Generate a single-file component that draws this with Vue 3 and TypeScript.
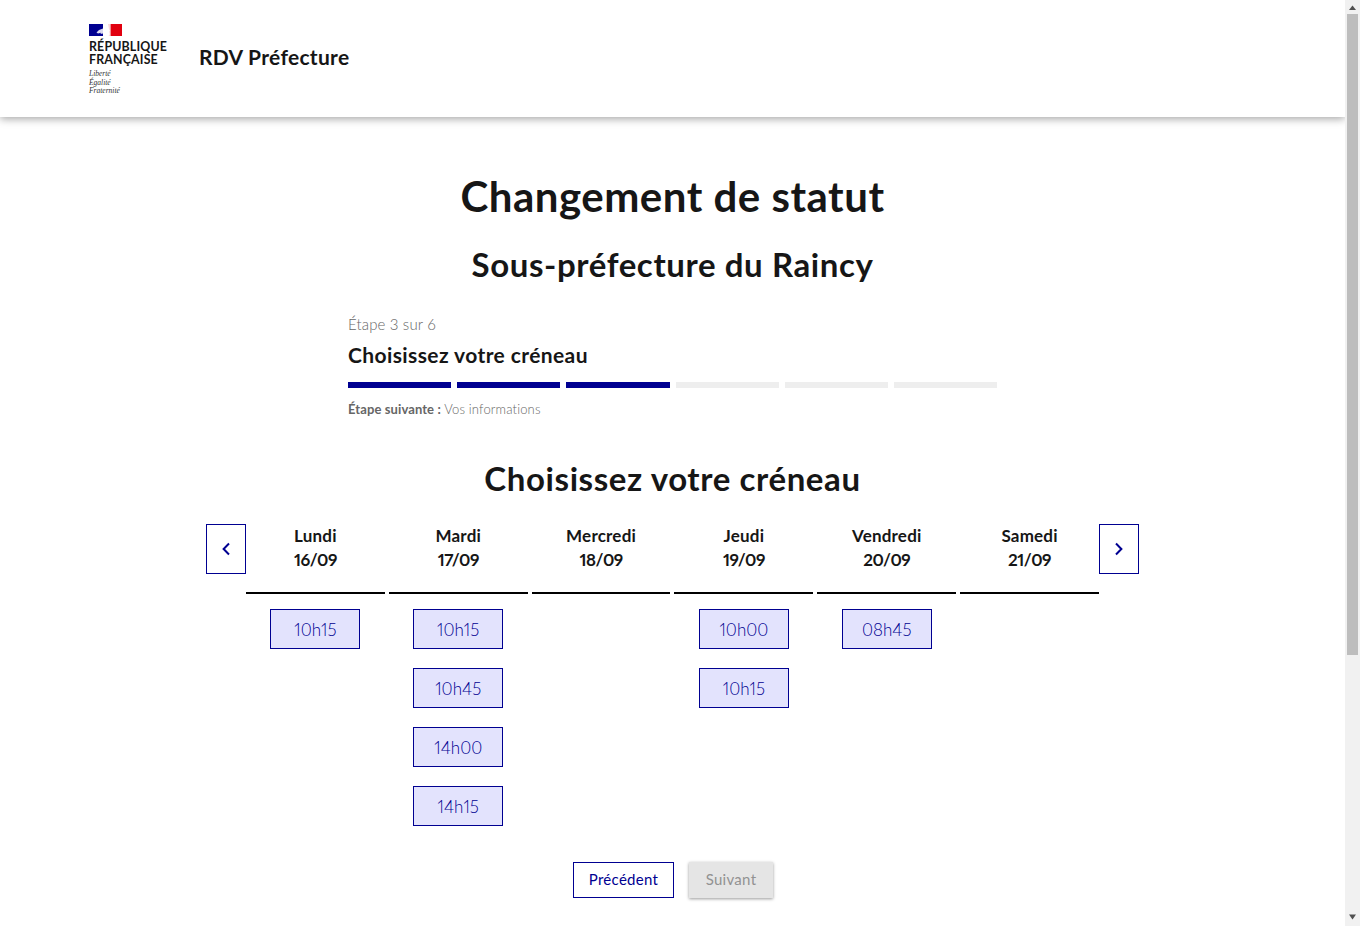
<script setup lang="ts">
interface Day { name: string; date: string; slots: string[] }
const days: Day[] = [
  { name: 'Lundi', date: '16/09', slots: ['10h15'] },
  { name: 'Mardi', date: '17/09', slots: ['10h15', '10h45', '14h00', '14h15'] },
  { name: 'Mercredi', date: '18/09', slots: [] },
  { name: 'Jeudi', date: '19/09', slots: ['10h00', '10h15'] },
  { name: 'Vendredi', date: '20/09', slots: ['08h45'] },
  { name: 'Samedi', date: '21/09', slots: [] },
]
const steps = [true, true, true, false, false, false]
</script>

<template>
  <div class="page">
    <div class="content">
      <header class="header">
        <div class="logo">
          <svg class="flag" width="33" height="12" viewBox="0 0 33 12">
            <rect width="33" height="12" fill="#fff" />
            <rect width="14" height="12" fill="#000091" />
            <rect x="21.5" width="11.5" height="12" fill="#e1000f" />
            <path d="M17 0 L14 3 L14 4.5 L10 6 L7.5 8.5 L9 9.5 L12 8.8 L11.5 10 L14 9.5 L14 12 L16 12 C15 10 15 8 15.5 6.5 L16 3 Z" fill="#fff" opacity=".85" />
            <path d="M19 0 L21.5 0 L21.5 12 L19.5 12 C20.5 11 21 10 20.5 9 L20 7.5 L21 7 L20 5 L19.5 2.5 Z" fill="#f4b6ba" opacity=".55" />
          </svg>
          <div class="rf">RÉPUBLIQUE<br />FRANÇAISE</div>
          <div class="motto">Liberté<br />Égalité<br />Fraternité</div>
        </div>
        <div class="service">RDV Préfecture</div>
      </header>

      <main class="main">
        <h1 class="title">Changement de statut</h1>
        <h2 class="subtitle">Sous-préfecture du Raincy</h2>

        <section class="stepper">
          <div class="step-count">Étape 3 sur 6</div>
          <div class="step-title">Choisissez votre créneau</div>
          <div class="bars">
            <span v-for="(on, i) in steps" :key="i" class="bar" :class="{ on }"></span>
          </div>
          <div class="step-next"><b>Étape suivante :</b> <span class="next-name">Vos informations</span></div>
        </section>

        <h2 class="subtitle second">Choisissez votre créneau</h2>

        <section class="calendar">
          <button class="nav">
            <svg width="10" height="14" viewBox="0 0 10 14"><path d="M8 1.5 L2.6 7 L8 12.5" fill="none" stroke="#000091" stroke-width="2" /></svg>
          </button>
          <div class="days">
            <div v-for="d in days" :key="d.date" class="day">
              <div class="day-head">{{ d.name }}<br /><span class="date">{{ d.date }}</span></div>
              <div class="slots">
                <button v-for="s in d.slots" :key="s" class="slot">{{ s }}</button>
              </div>
            </div>
          </div>
          <button class="nav">
            <svg width="10" height="14" viewBox="0 0 10 14"><path d="M2 1.5 L7.4 7 L2 12.5" fill="none" stroke="#000091" stroke-width="2" /></svg>
          </button>
        </section>

        <div class="actions">
          <button class="btn secondary">Précédent</button>
          <button class="btn disabled">Suivant</button>
        </div>
      </main>
    </div>
    <aside class="scrollbar">
      <svg class="arrow" width="15" height="14" viewBox="0 0 15 14"><path d="M7.5 5.5 L11 10 L4 10Z" fill="#505050" /></svg>
      <div class="thumb"></div>
      <svg class="arrow down" width="15" height="14" viewBox="0 0 15 14"><path d="M4 2.5 L11 2.5 L7.5 7.5Z" fill="#505050" /></svg>
    </aside>
  </div>
</template>

<style>
html, body { margin: 0; overflow: hidden; background: #fff; }
</style>

<style scoped>
.page {
  display: flex;
  height: 926px;
  overflow: hidden;
  font-family: "Lato", "Noto Sans", sans-serif;
  color: #161616;
  background: #fff;
}
.content { width: 1345px; flex: none; }
.header {
  height: 117px;
  box-sizing: border-box;
  display: flex;
  align-items: flex-start;
  padding: 24px 0 0 89px;
  box-shadow: 0 2px 8px rgba(0, 0, 0, 0.35);
}
.logo { width: 110px; display: flex; flex-direction: column; align-items: flex-start; }
.flag { display: block; }
.rf {
  margin-top: 4px;
  font-family: "Lato", sans-serif;
  font-weight: 700;
  font-size: 12.4px;
  line-height: 13px;
  letter-spacing: 0.15px;
  color: #161616;
}
.motto {
  margin-top: 4px;
  font-family: "Liberation Serif", serif;
  font-style: italic;
  font-size: 7.5px;
  line-height: 8.5px;
  color: #333;
}
.service { font-weight: 700; font-size: 21px; line-height: 28px; margin-top: 19px; letter-spacing: 0.3px; }
.main { display: flex; flex-direction: column; align-items: center; }
.title { margin: 53px 0 0; font-size: 42px; line-height: 52px; font-weight: 700; letter-spacing: 0.5px; }
.subtitle { margin: 22px 0 0; font-size: 33px; line-height: 40px; font-weight: 700; letter-spacing: 0.6px; }
.stepper { width: 649px; margin-top: 28px; }
.step-count { font-size: 15px; line-height: 24px; color: #666; font-weight: 300; letter-spacing: 0.15px; }
.step-title { margin-top: 5px; font-size: 21px; line-height: 28px; font-weight: 700; letter-spacing: 0.4px; }
.bars { display: flex; gap: 6px; margin-top: 13px; }
.bar { flex: 1; height: 6px; background: #eee; }
.bar.on { background: #000091; }
.step-next { margin-top: 11px; font-size: 13px; line-height: 20px; color: #666; letter-spacing: 0.1px; }
.next-name { font-weight: 300; letter-spacing: 0.15px; }
.second { margin-top: 39px; }
.calendar { display: flex; align-items: flex-start; margin-top: 26px; width: 933px; }
.nav {
  width: 40px;
  height: 50px;
  flex: none;
  box-sizing: border-box;
  border: 1px solid #000091;
  background: #fff;
  padding: 0;
  display: flex;
  align-items: center;
  justify-content: center;
}
.days { flex: 1; display: grid; grid-template-columns: repeat(6, 1fr); gap: 4px; }
.day { display: flex; flex-direction: column; align-items: center; }
.day-head {
  align-self: stretch;
  height: 70px;
  box-sizing: border-box;
  text-align: center;
  font-weight: 700;
  font-size: 17px;
  line-height: 24px;
  letter-spacing: 0.2px;
  border-bottom: 2px solid #000;
}
.date { font-variant-numeric: proportional-nums; letter-spacing: -0.5px; }
.slots { display: flex; flex-direction: column; gap: 19px; margin-top: 15px; }
.slot {
  width: 90px;
  height: 40px;
  box-sizing: border-box;
  border: 1px solid #000091;
  background: #e3e3fd;
  color: #000091;
  font-family: inherit;
  font-size: 17px;
  padding: 1px 0 0;
  font-weight: 300;
  font-variant-numeric: proportional-nums;
}
.actions { display: flex; gap: 15px; margin: 36px 0 0 1px; align-items: center; }
.btn {
  height: 36px;
  box-sizing: border-box;
  font-family: inherit;
  font-size: 15px;
  padding: 0 0 3px;
  letter-spacing: 0.3px;
}
.secondary { width: 101px; border: 1px solid #000091; background: #fff; color: #000091; }
.disabled {
  width: 84px;
  border: none;
  background: #e5e5e5;
  color: #929292;
  box-shadow: 0 1px 3px rgba(0, 0, 0, 0.4);
}
.scrollbar {
  width: 15px;
  flex: none;
  height: 926px;
  background: #f1f1f1;
  display: flex;
  flex-direction: column;
  align-items: center;
}
.arrow { flex: none; }
.thumb { width: 11px; height: 641px; background: #bdbdbd; }
.down { margin-top: auto; }
</style>
